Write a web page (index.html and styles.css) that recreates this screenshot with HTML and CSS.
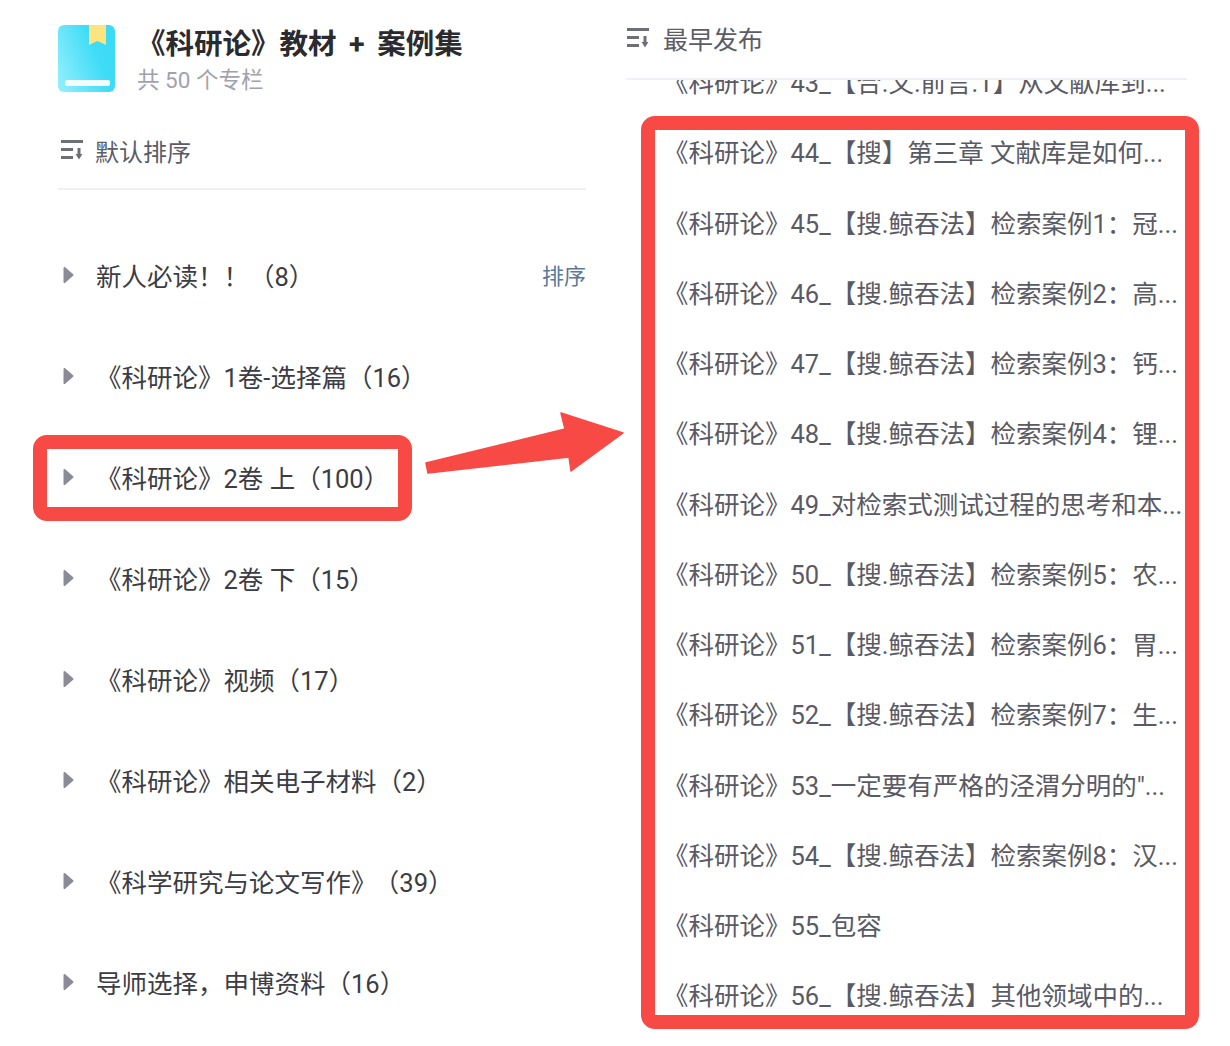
FILE: index.html
```html
<!DOCTYPE html>
<html lang="zh-CN">
<head>
<meta charset="utf-8">
<title>《科研论》教材 + 案例集</title>
<link rel="stylesheet" href="styles.css">
</head>
<body>
<svg width="0" height="0" class="defs">
  <symbol id="sort" viewBox="0 0 24 22">
    <path d="M1 2.5H23M1 10.5H13M1 18.5H13" fill="none" stroke="currentColor" stroke-width="3"/>
    <path d="M19 9V15.5" fill="none" stroke="currentColor" stroke-width="3"/>
    <path d="M15.6 15H22.4L19 20.5Z" fill="currentColor"/>
  </symbol>
  <symbol id="caret" viewBox="0 0 12 18">
    <path d="M1.5 2L9.5 9L1.5 16Z" fill="currentColor" stroke="currentColor" stroke-width="2" stroke-linejoin="round"/>
  </symbol>
</svg>
<main class="page">
  <section class="left">
    <header class="book">
      <svg class="logo" viewBox="0 0 57 67">
        <defs>
          <linearGradient id="cover" x1="0" y1="0.8" x2="1" y2="0.35">
            <stop offset="0" stop-color="#8feefc"/>
            <stop offset="0.7" stop-color="#3fdcf7"/>
            <stop offset="1" stop-color="#3bdaf6"/>
          </linearGradient>
        </defs>
        <rect width="57" height="67" rx="6" fill="url(#cover)"/>
        <path d="M31 0H48V20L39.5 16L31 20Z" fill="#fce480"/>
        <rect x="7" y="55" width="45" height="6" rx="2" fill="#f2fdff"/>
      </svg>
      <div class="book-text">
        <h1 class="book-title">《科研论》教材 + 案例集</h1>
        <p class="book-sub">共 50 个专栏</p>
      </div>
    </header>
    <div class="sort-left">
      <svg class="sort-icon"><use href="#sort"/></svg>
      <span>默认排序</span>
    </div>
    <ul class="groups">
      <li class="group"><svg class="caret"><use href="#caret"/></svg><span class="group-name">新人必读！！（8）</span><a class="group-action">排序</a></li>
      <li class="group"><svg class="caret"><use href="#caret"/></svg><span class="group-name">《科研论》1卷-选择篇（16）</span></li>
      <li class="group"><svg class="caret"><use href="#caret"/></svg><span class="group-name">《科研论》2卷 上（100）</span></li>
      <li class="group"><svg class="caret"><use href="#caret"/></svg><span class="group-name">《科研论》2卷 下（15）</span></li>
      <li class="group"><svg class="caret"><use href="#caret"/></svg><span class="group-name">《科研论》视频（17）</span></li>
      <li class="group"><svg class="caret"><use href="#caret"/></svg><span class="group-name">《科研论》相关电子材料（2）</span></li>
      <li class="group"><svg class="caret"><use href="#caret"/></svg><span class="group-name group-name-tight">《科学研究与论文写作》 （39）</span></li>
      <li class="group"><svg class="caret"><use href="#caret"/></svg><span class="group-name">导师选择，申博资料（16）</span></li>
    </ul>
  </section>
  <section class="right">
    <div class="sort-right">
      <svg class="sort-icon"><use href="#sort"/></svg>
      <span>最早发布</span>
    </div>
    <div class="viewport">
      <ul class="articles">
        <li class="article">《科研论》43_【合.文.前言.1】从文献库到...</li>
        <li class="article">《科研论》44_【搜】第三章 文献库是如何...</li>
        <li class="article">《科研论》45_【搜.鲸吞法】检索案例1：冠...</li>
        <li class="article">《科研论》46_【搜.鲸吞法】检索案例2：高...</li>
        <li class="article">《科研论》47_【搜.鲸吞法】检索案例3：钙...</li>
        <li class="article">《科研论》48_【搜.鲸吞法】检索案例4：锂...</li>
        <li class="article">《科研论》49_对检索式测试过程的思考和本...</li>
        <li class="article">《科研论》50_【搜.鲸吞法】检索案例5：农...</li>
        <li class="article">《科研论》51_【搜.鲸吞法】检索案例6：胃...</li>
        <li class="article">《科研论》52_【搜.鲸吞法】检索案例7：生...</li>
        <li class="article">《科研论》53_一定要有严格的泾渭分明的"...</li>
        <li class="article">《科研论》54_【搜.鲸吞法】检索案例8：汉...</li>
        <li class="article">《科研论》55_包容</li>
        <li class="article">《科研论》56_【搜.鲸吞法】其他领域中的...</li>
      </ul>
    </div>
  </section>
</main>
<div class="mark mark-left"></div>
<div class="mark mark-right"></div>
<svg class="arrow" viewBox="0 0 1230 1046">
  <path d="M426 463L565 429L561 413L623 433L571 471L569 457L428 473Z" fill="#f84a45" stroke="#f84a45" stroke-width="1.5" stroke-linejoin="round"/>
</svg>
</body>
</html>
```
FILE: styles.css
```css
* { box-sizing: border-box; }
html, body { margin: 0; height: 100%; background: #fff; overflow: hidden; }
body { font-family: Roboto, "Noto Sans CJK SC", sans-serif; color: #444; position: relative; }
ul { list-style: none; margin: 0; padding: 0; }
h1, p { margin: 0; }
.defs { position: absolute; }

.page { display: flex; align-items: flex-start; gap: 40px; padding: 0 43px 0 58px; height: 1046px; }
.left { width: 528px; flex: none; }
.right { width: 561px; flex: none; }

.book { display: flex; align-items: flex-start; gap: 22px; padding-top: 25px; height: 114px; }
.logo { width: 57px; height: 67px; flex: none; }
.book-text { margin-top: -1px; }
.book-title { font-size: 28.5px; line-height: 42px; font-weight: 700; color: #2b2b2f; white-space: nowrap; word-spacing: 5.5px; }
.book-sub { font-size: 22.5px; line-height: 29px; color: #a2a2ac; white-space: nowrap; }

.sort-left, .sort-right { display: flex; align-items: center; white-space: nowrap; color: #5c5c66; }
.sort-left { height: 76px; gap: 11px; font-size: 24px; padding-bottom: 2px; border-bottom: 2px solid #f0f0f4; padding-left: 2px; }
.sort-right { height: 80px; gap: 13px; font-size: 25px; border-bottom: 2px solid #f0f1f6; padding-bottom: 3px; }
.sort-icon { width: 24px; height: 22px; color: #6e6e78; flex: none; }

.groups { margin-top: 36px; }
.group { display: flex; align-items: center; height: 101px; font-size: 25.5px; color: #3c3c44; white-space: pre; }
.caret { width: 12px; height: 18px; color: #8b8b98; margin: 0 0 4px 5px; flex: none; }
.group-name { margin: 0 0 5px 21px; }
.group-name-tight { word-spacing: -9px; }
.group-action { margin: 0 0 5px auto; font-size: 22px; color: #5a7a96; }

.viewport { height: 966px; overflow: hidden; }
.articles { margin-top: -32px; }
.article { height: 70.25px; line-height: 70.25px; font-size: 25.5px; color: #5a5a64; white-space: nowrap; padding-left: 37px; }

.mark { position: absolute; border: 14px solid #f84a45; border-radius: 14px; background: transparent; }
.mark-left { left: 33px; top: 435px; width: 379px; height: 86px; }
.mark-right { left: 641px; top: 116px; width: 558px; height: 913px; }
.arrow { position: absolute; left: 0; top: 0; width: 1230px; height: 1046px; pointer-events: none; }
```
